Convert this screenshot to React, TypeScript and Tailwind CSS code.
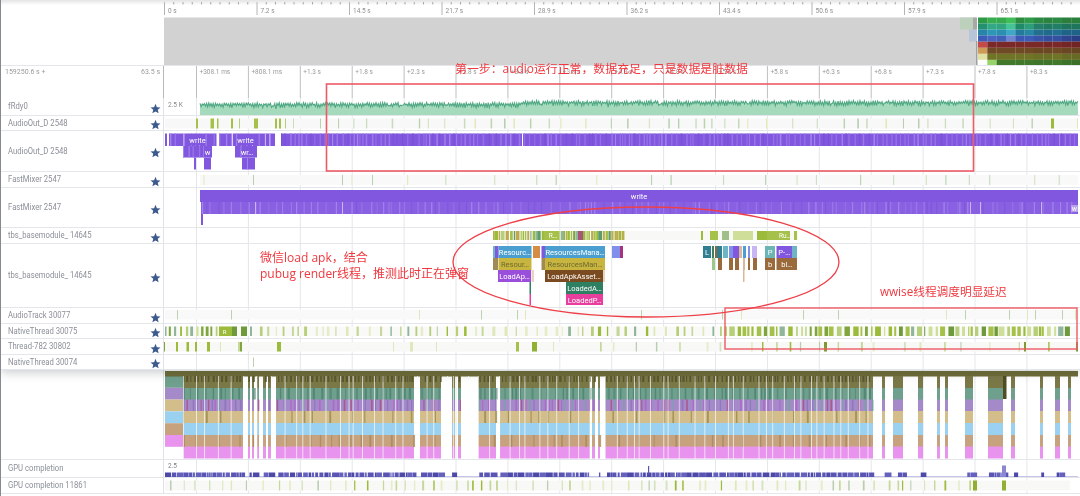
import React from "react";

type Bar = { x: number; w: number; c: string };

function rng(seed: number) {
  let a = seed >>> 0;
  return () => {
    a = (a + 0x6d2b79f5) >>> 0;
    let t = a;
    t = Math.imul(t ^ (t >>> 15), t | 1);
    t ^= t + Math.imul(t ^ (t >>> 7), t | 61);
    return ((t ^ (t >>> 14)) >>> 0) / 4294967296;
  };
}

function scatter(seed: number, from: number, to: number, minGap: number, maxGap: number, maxW: number, colors: string[]): Bar[] {
  const r = rng(seed);
  const out: Bar[] = [];
  let x = from;
  while (x < to) {
    const w = 1 + r() * (maxW - 1);
    out.push({ x, w, c: colors[Math.floor(r() * colors.length)] });
    x += w + minGap + r() * (maxGap - minGap);
  }
  return out;
}

const GRID = Array.from({ length: 17 }, (_, i) => 196 + i * 51.9);
const LIGHT = ["#bcd3b0", "#c9dcc0", "#e3e8b8", "#b5cfb0", "#d5e2c0"];
const MID = ["#b7cf7a", "#dfe8bb", "#c5d89a", "#b9cdb0", "#e6ecc8", "#9dbb3a", "#8fb59a"];
const STRONG = ["#9dbb3a", "#a5c14a", "#7fa53c", "#b7cf7a", "#6f9a3c", "#8fb59a", "#cfdf9a", "#a5c14a"];
const HIST = ["#dfe8bb", "#c5d89a", "#e6ecc8", "#b9cdb0", "#9dbb3a", "#d5e2c0"];

const ON: [number, number][] = [
  [183, 243], [248, 250], [252, 254], [257, 259], [263, 266], [268, 271], [276, 414], [420, 441], [452, 455], [458, 461],
  [478, 496], [500, 590], [592, 595], [598, 600], [605, 873], [882, 885], [893, 903], [918, 923], [937, 940], [945, 948],
  [965, 973], [988, 1003], [1011, 1015], [1040, 1043], [1055, 1060], [1068, 1071],
];

function TrackBars({ top, bottom, bars }: { top: number; bottom: number; bars: Bar[] }) {
  return (
    <>
      {bars.map((b, i) => (
        <rect key={i} x={b.x} y={top} width={b.w} height={bottom - top} fill={b.c} />
      ))}
    </>
  );
}

function Star() {
  return (
    <svg viewBox="0 0 24 24" className="absolute right-[2.5px] top-1/2 mt-[-4px] h-[11px] w-[11px] fill-[#3d5a8e]">
      <path d="M12 1.8l3 7.3 7.9.6-6 5.2 1.9 7.7L12 18.4l-6.8 4.2 1.9-7.7-6-5.2 7.9-.6z" />
    </svg>
  );
}

function Track({ top, cls, label, star = true, children }: { top: number; cls: string; label?: string; star?: boolean; children?: React.ReactNode }) {
  return (
    <div className={`flex border-b border-[#e3e6ea] bg-white ${cls}`}>
      <div className="relative flex w-[163px] shrink-0 items-center border-r border-[#dfe3e7] pl-[7px] pr-[16px] font-['Roboto',sans-serif] text-[9.5px] whitespace-nowrap text-[#8b9098]">
        <span className="origin-left scale-x-[0.81]">{label}</span>
        {star && <Star />}
      </div>
      <svg className="block h-full min-w-0 flex-1 font-['Roboto',sans-serif]">
        <g transform={`translate(-164,${-top})`}>
          {GRID.map((g) => (
            <rect key={g} x={g} y={top} width={1} height={100} fill="#e4e7ea" />
          ))}
          {children}
        </g>
      </svg>
    </div>
  );
}

function Slice({ a, b, y, c, t, tc = "#ffffff", h = 12 }: { a: number; b: number; y: number; c: string; t?: string; tc?: string; h?: number }) {
  return (
    <>
      <rect x={a} y={y} width={b - a} height={h} fill={c} />
      {t && (
        <text x={(a + b) / 2} y={y + 8.5} textAnchor="middle" fontSize={7.5} fill={tc}>
          {t}
        </text>
      )}
    </>
  );
}

const HEAT: string[][] = [
  ["#2f9a45", "#37ad50", "#37aa4f", "#3fbe58", "#2b8c40", "#2f9a48", "#2b8a42", "#2a8440", "#2b8842", "#2a7f3d", "#2a7f3d"],
  ["#239070", "#32a884", "#30a580", "#45c495", "#1f8a68", "#2e9d7a", "#24806a", "#207a60", "#207f66", "#1f755c", "#1f755c"],
  ["#2985a8", "#2e97b5", "#2c8fb0", "#3fa8c8", "#237a9c", "#2787a5", "#226f90", "#206a8c", "#216f92", "#1f6488", "#1f6488"],
  ["#3d5cb8", "#4664c0", "#4060b8", "#6f85cf", "#3a58b4", "#3c5cb8", "#3754a8", "#344e9e", "#3450a0", "#2f4590", "#2b3f86"],
  ["#c44a4a", "#7a2828", "#7a2828", "#7a2828", "#7a2828", "#7a2828", "#7a2828", "#762626", "#7a2828", "#742626", "#702424"],
  ["#cd9b55", "#6f4a24", "#6f4a24", "#6f4a24", "#6f4a24", "#6f4a24", "#6c4822", "#6c4822", "#6f4a24", "#6a4622", "#684522"],
  ["#e0e0a5", "#6f7426", "#6f7426", "#6f7426", "#6f7426", "#6f7426", "#6c7025", "#6c7025", "#6f7426", "#686c24", "#666a24"],
  ["#ffffff", "#96d368", "#41782a", "#41782a", "#41782a", "#41782a", "#3f752a", "#3f752a", "#41782a", "#3d7229", "#3c7028"],
];

const MAJOR = ["0 s", "7.2 s", "14.5 s", "21.7 s", "28.9 s", "36.2 s", "43.4 s", "50.6 s", "57.9 s", "65.1 s"];
const REL: [number, string][] = [
  [0, "+308.1 ms"], [1, "+808.1 ms"], [2, "+1.3 s"], [3, "+1.8 s"], [4, "+2.3 s"], [5, "+2.8 s"], [6, "+3.3 s"], [7, "+3.8 s"],
  [8, "+4.3 s"], [9, "+4.8 s"], [10, "+5.3 s"], [11, "+5.8 s"], [12, "+6.3 s"], [13, "+6.8 s"], [14, "+7.3 s"], [15, "+7.8 s"], [16, "+8.3 s"],
];

function Area() {
  const r = rng(11);
  let d = "M200 116 ";
  let line = "";
  let flip = false;
  for (let x = 200; x <= 1078; x += 1.1) {
    const base = x < 522 ? 102.5 : 100.5;
    flip = !flip;
    const y = base + (flip ? r() * 1.8 : 2.4 + r() * 3) + (r() < 0.02 ? 2 : 0);
    d += `L${x.toFixed(1)} ${y.toFixed(1)} `;
    line += `${line ? "L" : "M"}${x.toFixed(1)} ${y.toFixed(1)} `;
  }
  d += "L1078 116Z";
  return (
    <>
      <path d={d} fill="#a6dabd" />
      <path d={line} fill="none" stroke="#4fa883" strokeWidth={1.1} />
    </>
  );
}

const purpleLight = scatter(21, 281, 1078, 1, 5, 1.6, ["#9470e6", "#9a78e8", "#7a52d6", "#9270e4", "#a184ec"]);
const purpleLeft: [number, number][] = [[165, 167], [169, 216.5], [219, 231], [233, 275]];
const purpleLeftLight = scatter(22, 170, 275, 2, 8, 1.6, ["#a184ec", "#9a78e8", "#c8b6f4"]);
const purpleL2 = scatter(23, 183, 257, 2, 6, 1.5, ["#a184ec", "#9a78e8"]);
const mixerLight = scatter(24, 202, 1077, 1, 9, 1.3, ["#9470e6", "#9a78e8", "#7e58da", "#a184ec"]);
const bigSpeck = scatter(31, 183, 873, 3, 15, 1, ["#ffffff"]);
const specks = scatter(32, 183, 873, 0.8, 3.5, 2.4, ["#4f4d22"]);
const tealSpecks = scatter(33, 183, 873, 2, 7, 2.4, ["#4f7f70", "#3f7565"]);
const purpleSpecks = scatter(34, 183, 873, 1.5, 6, 1.8, ["#a84a7a", "#6fa89a", "#b060c8", "#8a70b8"]);
const tanSpecks = scatter(35, 183, 873, 6, 28, 2, ["#9a8a4a"]);
const brownSpecks = scatter(36, 183, 873, 6, 24, 2, ["#a88a5a"]);

const inOn = (x: number) => ON.some(([a, b]) => x >= a && x <= b);

function BigChart() {
  const rows = [
    { y: 388, c: "#6fa08d" },
    { y: 399.5, c: "#a48ac8" },
    { y: 411, c: "#d3bd8b" },
    { y: 423, c: "#9ad0f0" },
    { y: 435, c: "#c6a27f" },
    { y: 446.5, c: "#e893ee" },
  ];
  const first = ["#6fa08d", "#a48ac8", "#d3bd8b", "#9ad0f0", "#c6a27f", "#e893ee"];
  return (
    <>
      {first.map((c, i) => (
        <rect key={c} x={165} y={376 + i * 11.8} width={18} height={11.8} fill={c} />
      ))}
      <rect x={165} y={371} width={913} height={5.5} fill="#6e6c36" />
      {ON.map(([a, b]) => (
        <React.Fragment key={a}>
          <rect x={a} y={376} width={b - a} height={12} fill="#7b7848" />
          {rows.map((r) => (
            <rect key={r.y} x={a} y={r.y} width={b - a} height={12} fill={r.c} />
          ))}
        </React.Fragment>
      ))}
      {specks.filter((b) => inOn(b.x)).map((b, i) => (
        <rect key={i} x={b.x} y={376} width={b.w} height={6 + ((i * 7) % 7)} fill={b.c} opacity={0.75} />
      ))}
      {tealSpecks.filter((b) => inOn(b.x)).map((b, i) => (
        <rect key={i} x={b.x} y={388} width={b.w} height={11.5} fill={b.c} opacity={0.6} />
      ))}
      {purpleSpecks.filter((b) => inOn(b.x)).map((b, i) => (
        <rect key={i} x={b.x} y={399.5} width={b.w} height={11.5} fill={b.c} opacity={0.75} />
      ))}
      {tanSpecks.filter((b) => inOn(b.x)).map((b, i) => (
        <rect key={i} x={b.x} y={411} width={b.w} height={12} fill={b.c} opacity={0.8} />
      ))}
      {brownSpecks.filter((b) => inOn(b.x)).map((b, i) => (
        <rect key={i} x={b.x} y={435} width={b.w} height={12} fill={b.c} opacity={0.8} />
      ))}
      {bigSpeck.map((b, i) => (
        <rect key={i} x={b.x} y={376} width={b.w * 0.9} height={83} fill="#ffffff" opacity={0.75} />
      ))}
      <rect x={1003} y={376} width={3.5} height={23} fill="#4f4d22" />
    </>
  );
}

const gpuBars = scatter(41, 165, 1075, 0, 1.3, 7, ["#5a55b5", "#6561bd", "#4d49a8", "#5a55b5"]).filter((b) => b.x < 183 || inOn(b.x));

export default function App() {
  return (
    <div className="relative h-[496px] w-[1080px] overflow-hidden border-l border-[#858a90] bg-white blur-[0.5px]">
      <div className="relative z-10 shadow-[0_3px_9px_rgba(60,64,70,0.25)]">
        <div className="flex h-[17px] bg-gradient-to-b from-[#e4e4e4] via-white via-[30%] to-white">
          <div className="w-[163px] shrink-0" />
          <svg className="block h-full min-w-0 flex-1 font-['Roboto',sans-serif]">
            <g transform="translate(-164,0)">
              {Array.from({ length: 99 }, (_, i) => (
                <rect key={i} x={164 + i * 9.25} y={2} width={1} height={i % 10 === 0 ? 13 : 2.5} fill={i % 10 === 0 ? "#b5b5b5" : "#a8a8a8"} />
              ))}
              {MAJOR.map((t, i) => (
                <text key={t} x={168 + i * 92.5} y={13} fontSize={6.5} fill="#8f8f8f">
                  {t}
                </text>
              ))}
            </g>
          </svg>
        </div>
        <div className="flex h-[49px] border-b border-[#e3e6ea]">
          <div className="w-[163px] shrink-0" />
          <svg className="block h-full min-w-0 flex-1">
            <g transform="translate(-164,-17)">
              <rect x={164} y={17.5} width={812} height={48} fill="#d2d2d2" />
              <rect x={960} y={17.5} width={13} height={12} fill="#bcd0bc" />
              <rect x={969} y={29.5} width={8} height={12} fill="#b8c4d8" />
              <rect x={973} y={17.5} width={4} height={12} fill="#a8a8a8" />
              <rect x={976} y={41} width={1.5} height={25} fill="#9f9f9f" />
              {HEAT.map((row, r) =>
                row.map((c, i) => (
                  <rect key={`${r}-${i}`} x={978 + i * 9.32} y={17.5 + r * 6.05} width={9.4} height={6.1} fill={c} />
                )),
              )}
            </g>
          </svg>
        </div>
        <div className="flex h-[32px]">
          <div className="flex w-[163px] shrink-0 items-start justify-between border-r border-[#b5b8bb] pl-[4px] pr-[3px] pt-[1px] font-['Roboto',sans-serif] text-[7px] text-[#9a9a9a]">
            <span>159250.6 s +</span>
            <span>63.5 s</span>
          </div>
          <svg className="block h-full min-w-0 flex-1 font-['Roboto',sans-serif]">
            <g transform="translate(-164,-66)">
              {GRID.map((g) => (
                <rect key={g} x={g} y={66} width={1} height={32} fill="#bdbfc2" />
              ))}
              {REL.map(([i, t]) => (
                <text key={t} x={GRID[i] + 3.5} y={73.5} fontSize={6.5} fill="#9a9a9a">
                  {t}
                </text>
              ))}
            </g>
          </svg>
        </div>

        <Track top={98} cls="h-[18px]" label="fRdy0">
          <Area />
          <text x={168} y={106.5} fontSize={6.5} fill="#8a8a8a">
            2.5 K
          </text>
        </Track>

        <Track top={116} cls="h-[15px]" label="AudioOut_D 2548">
          <rect x={165} y={118.5} width={913} height={10} fill="#f7f8f7" />
          <TrackBars
            top={118.5}
            bottom={128.5}
            bars={[
              { x: 196, w: 2, c: "#a5c14a" }, { x: 210.5, w: 3.5, c: "#a5c14a" }, { x: 217, w: 1.5, c: "#a5c14a" }, { x: 231, w: 2, c: "#a5c14a" }, { x: 239, w: 1, c: "#b7cf7a" },
              { x: 254, w: 4, c: "#a5c14a" }, { x: 275, w: 2, c: "#a5c14a" }, { x: 279, w: 2, c: "#a5c14a" }, { x: 285, w: 1, c: "#b7cf7a" }, { x: 293, w: 1, c: "#c9dcc0" }, { x: 320, w: 1, c: "#b9d3ad" },
              ...scatter(51, 338, 1040, 6, 26, 1.6, LIGHT),
              { x: 1051, w: 3, c: "#9dbb3a" }, { x: 1077, w: 1, c: "#dfe8bb" },
            ]}
          />
        </Track>

        <Track top={131} cls="h-[41px]" label="AudioOut_D 2548">
          {purpleLeft.map(([a, b]) => (
            <rect key={a} x={a} y={133.5} width={b - a} height={12.5} fill="#8257df" />
          ))}
          <TrackBars top={133.5} bottom={146} bars={purpleLeftLight.filter((b) => b.x < 216 || (b.x > 219 && b.x < 231) || b.x > 233)} />
          <rect x={281} y={133.5} width={797} height={12.5} fill="#8257df" />
          <TrackBars top={133.5} bottom={146} bars={purpleLight} />
          <rect x={522} y={133.5} width={1} height={12.5} fill="#ffffff" />
          <rect x={183} y={146} width={29} height={11.5} fill="#8257df" />
          <rect x={235} y={146} width={22} height={11.5} fill="#8257df" />
          <TrackBars top={146} bottom={157.5} bars={purpleL2.filter((b) => b.x < 204 || (b.x > 235 && b.x < 245))} />
          <rect x={194} y={157.5} width={2} height={12} fill="#8257df" />
          <rect x={204} y={157.5} width={7} height={12} fill="#8257df" />
          <rect x={242} y={157.5} width={13} height={12} fill="#8257df" />
          <rect x={247} y={157.5} width={1} height={12} fill="#a184ec" />
          <rect x={190} y={134} width={15} height={11} fill="#8257df" />
          <rect x={238} y={134} width={15} height={11} fill="#8257df" />
          <text x={197.5} y={142.5} textAnchor="middle" fontSize={7.5} fill="#ffffff">write</text>
          <text x={245.5} y={142.5} textAnchor="middle" fontSize={7.5} fill="#ffffff">write</text>
          <text x={207.5} y={154.5} textAnchor="middle" fontSize={7.5} fill="#ffffff">w</text>
          <text x={247} y={154.5} textAnchor="middle" fontSize={7.5} fill="#ffffff">wr…</text>
        </Track>

        <Track top={172} cls="h-[16px]" label="FastMixer 2547">
          <rect x={200} y={175} width={878} height={10} fill="#f8f9f8" />
          <TrackBars
            top={175}
            bottom={185}
            bars={[
              { x: 203.5, w: 1, c: "#dfe8bb" }, { x: 253, w: 1, c: "#b5cfb0" }, { x: 342, w: 1, c: "#b5cfb0" }, { x: 351.5, w: 1, c: "#dfe8bb" },
              ...scatter(52, 372, 1070, 18, 55, 1.2, LIGHT),
            ]}
          />
        </Track>

        <Track top={188} cls="h-[40px]" label="FastMixer 2547">
          <rect x={200} y={190} width={878} height={12} fill="#8257df" />
          <rect x={201} y={202} width={877} height={12} fill="#8a60e2" />
          <TrackBars top={202} bottom={214} bars={mixerLight} />
          <rect x={255} y={202} width={1} height={12} fill="#c8b6f4" />
          <rect x={342} y={202} width={1} height={12} fill="#c8b6f4" />
          <rect x={970} y={202} width={1} height={12} fill="#c8b6f4" />
          <rect x={980} y={202} width={1} height={12} fill="#c8b6f4" />
          <rect x={1041} y={202} width={1} height={12} fill="#c8b6f4" />
          <rect x={201} y={214} width={2} height={11} fill="#8257df" />
          <text x={639} y={198.5} textAnchor="middle" fontSize={7.5} fill="#ffffff">write</text>
          <rect x={1071} y={205} width={7} height={7} fill="#b8a2ec" />
          <text x={1074.5} y={211} textAnchor="middle" fontSize={7} fill="#ffffff">w</text>
        </Track>

        <Track top={228} cls="h-[16px]" label="tbs_basemodule_ 14645">
          <rect x={493} y={231} width={305} height={9} fill="#f8f8f6" />
          <TrackBars
            top={231}
            bottom={240}
            bars={[
              ...scatter(53, 493, 623, 0, 1.2, 4, ["#9dbb3a", "#a5c14a", "#b7b04a", "#7fa53c", "#5f9a6a", "#b7cf7a", "#c0a850", "#8fb59a"]),
              { x: 578, w: 5, c: "#a8557a" }, { x: 544, w: 15, c: "#a5c14a" },
              { x: 701, w: 2, c: "#9dbb3a" }, { x: 710, w: 8, c: "#a5c14a" }, { x: 722, w: 7, c: "#a0c08a" }, { x: 733, w: 20, c: "#cfdf9a" },
              { x: 757, w: 10, c: "#9dbb3a" }, { x: 767, w: 23, c: "#a5c14a" }, { x: 794, w: 3, c: "#a5c14a" },
            ]}
          />
          <text x={553} y={238} textAnchor="middle" fontSize={6.5} fill="#ffffff">R…</text>
          <text x={785} y={238} textAnchor="middle" fontSize={6.5} fill="#ffffff">Ru…</text>
        </Track>

        <Track top={244} cls="h-[64px]" label="tbs_basemodule_ 14645">
          <Slice a={493} b={496} y={246} c="#6bb5c5" />
          <Slice a={495} b={498.5} y={246} c="#8257df" />
          <Slice a={498.5} b={531.5} y={246} c="#4a9fd0" t="Resourc…" />
          <Slice a={533} b={540} y={246} c="#d68e45" />
          <Slice a={541.5} b={545} y={246} c="#8257df" />
          <Slice a={545} b={605} y={246} c="#4a9fd0" t="ResourcesMana…" />
          <Slice a={612} b={620} y={246} c="#8090ea" />
          <Slice a={620} b={623} y={246} c="#a8327f" />
          <Slice a={703} b={711} y={246} c="#2f7f92" t="L" />
          <Slice a={712} b={714} y={246} c="#3f7f60" />
          <Slice a={715} b={717} y={246} c="#8a6a3a" />
          <Slice a={717} b={722} y={246} c="#2f7f92" />
          <Slice a={723} b={728} y={246} c="#6bb5c5" />
          <Slice a={729} b={733} y={246} c="#8090ea" />
          <Slice a={733} b={739} y={246} c="#8257df" />
          <Slice a={739} b={742} y={246} c="#d9b99a" />
          <Slice a={743} b={746} y={246} c="#4a9fd0" />
          <Slice a={748} b={750} y={246} c="#8090ea" />
          <Slice a={752} b={757} y={246} c="#c8b6f4" />
          <Slice a={765} b={775} y={246} c="#6bb5b5" t="P" />
          <Slice a={776.5} b={792} y={246} c="#8257df" t="P-…" />
          <Slice a={792} b={797} y={246} c="#6bb5c5" />
          <Slice a={493} b={498} y={258} c="#a08a55" />
          <Slice a={498.5} b={531.5} y={258} c="#c7b53f" t="Resour…" tc="#6f6a30" />
          <Slice a={541.5} b={545} y={258} c="#a08a55" />
          <Slice a={545} b={605} y={258} c="#c7b53f" t="ResourcesMan…" tc="#6f6a30" />
          <Slice a={712} b={715} y={258} c="#9cc98a" />
          <Slice a={718} b={722} y={258} c="#9a6a3c" />
          <Slice a={729} b={733} y={258} c="#9a6a3c" />
          <Slice a={735} b={739} y={258} c="#9a6a3c" />
          <Slice a={743} b={745} y={258} c="#d9b99a" />
          <Slice a={748} b={750} y={258} c="#9a6a3c" />
          <Slice a={753} b={757} y={258} c="#9a6a3c" />
          <Slice a={765} b={775} y={258} c="#9a6a3c" t="b" />
          <Slice a={776.5} b={797} y={258} c="#9a6a3c" t="bl…" />
          <Slice a={498} b={531} y={270} c="#9a4fdc" t="LoadAp…" />
          <Slice a={531.5} b={534} y={270} c="#e6d5c5" />
          <Slice a={545} b={603} y={270} c="#7a4a20" t="LoadApkAsset…" />
          <Slice a={603} b={605} y={270} c="#e6d5c5" />
          <Slice a={743} b={744.5} y={270} c="#d9b99a" />
          <Slice a={529.5} b={531} y={282} c="#2f7f62" />
          <Slice a={566} b={603} y={282} c="#2f7f62" t="LoadedA…" />
          <Slice a={529.5} b={531} y={294} c="#e83e9e" h={11} />
          <Slice a={566} b={603} y={294} c="#e83e9e" t="LoadedP…" h={11} />
        </Track>

        <Track top={308} cls="h-[16px]" label="AudioTrack 30077">
          <rect x={165} y={310} width={913} height={9.5} fill="#f8f9f8" />
          <TrackBars
            top={310}
            bottom={319.5}
            bars={[177, 231, 419, 481, 517, 525, 641, 722, 741, 803, 838, 946, 965, 1009, 1027, 1035, 1062, 1075].map((x, i) => ({ x, w: 1, c: i % 3 === 2 ? "#dfe8bb" : "#bcd3b0" }))}
          />
        </Track>

        <Track top={324} cls="h-[15px]" label="NativeThread 30075">
          <rect x={165} y={326.5} width={913} height={9.5} fill="#f9f9f8" />
          <TrackBars
            top={326.5}
            bottom={336}
            bars={[
              ...scatter(54, 165, 218, 1.5, 4, 3, STRONG),
              { x: 219, w: 13, c: "#9dbb3a" }, { x: 232, w: 5, c: "#6f9a3c" }, { x: 241, w: 6, c: "#6f9a3c" },
              ...scatter(55, 250, 720, 3, 10, 3.2, MID),
              ...scatter(56, 720, 1070, 0.6, 3.5, 6, STRONG),
            ]}
          />
          <text x={224.5} y={333.5} textAnchor="middle" fontSize={6} fill="#ffffff">R</text>
        </Track>

        <Track top={339} cls="h-[16px]" label="Thread-782 30802">
          <rect x={165} y={342} width={913} height={9.5} fill="#f8f8f7" />
          <TrackBars
            top={342}
            bottom={351.5}
            bars={[
              { x: 164, w: 1, c: "#7fa53c" }, { x: 176, w: 2, c: "#9dbb3a" }, { x: 186.5, w: 2.5, c: "#9dbb3a" }, { x: 195, w: 2, c: "#9dbb3a" }, { x: 207, w: 3, c: "#9dbb3a" }, { x: 220, w: 1, c: "#dfe8bb" },
              { x: 238, w: 2, c: "#c5d89a" }, { x: 240, w: 2, c: "#7fa53c" }, { x: 277, w: 4, c: "#9dbb3a" }, { x: 393, w: 1, c: "#dfe8bb" }, { x: 410, w: 3, c: "#dfe8bb" }, { x: 436, w: 1, c: "#dfe8bb" },
              { x: 516, w: 3, c: "#a5c14a" }, { x: 532, w: 5, c: "#8fb030" }, { x: 553, w: 1, c: "#dfe8bb" },
              ...scatter(57, 600, 1060, 8, 30, 2, HIST),
              { x: 824, w: 3, c: "#7f9a30" }, { x: 1024, w: 2, c: "#7f9a30" }, { x: 1076, w: 2, c: "#7f9a30" },
            ]}
          />
        </Track>

        <Track top={355} cls="h-[15px]" label="NativeThread 30074">
          <rect x={253} y={357.5} width={1} height={9.5} fill="#bcd3b0" />
        </Track>
      </div>

      <Track top={370} cls="h-[90px]" star={false}>
        <BigChart />
      </Track>

      <Track top={460} cls="h-[18px]" label="GPU completion" star={false}>
        <text x={168} y={468} fontSize={6.5} fill="#7f7f7f">2.5</text>
        <rect x={165} y={476.5} width={913} height={1} fill="#8c8ad0" />
        {gpuBars.map((b, i) => (
          <rect key={i} x={b.x} y={472.5} width={b.w} height={5} fill={b.c} />
        ))}
        <rect x={648} y={466} width={1.2} height={8} fill="#5a55b5" />
        <rect x={1002} y={465.5} width={4} height={12} fill="#8a86d4" />
      </Track>

      <Track top={478} cls="h-[16px]" label="GPU completion 11861" star={false}>
        <rect x={165} y={480.5} width={905} height={10} fill="#f8f9f7" />
        <TrackBars
          top={480.5}
          bottom={490.5}
          bars={[
            ...scatter(58, 170, 970, 3, 16, 2, HIST),
            { x: 973, w: 4, c: "#8fb030" }, { x: 1002, w: 4, c: "#8fb030" }, { x: 902, w: 1.2, c: "#9dbb3a" },
          ]}
        />
      </Track>

      <svg className="pointer-events-none absolute left-[-1px] top-0 z-20 h-[496px] w-[1080px]">
        <rect x={326.5} y={84} width={647} height={87} fill="none" stroke="#ee5a66" strokeWidth={1.6} />
        <rect x={725} y={308} width={352} height={41} fill="none" stroke="#ee5a66" strokeWidth={1.4} />
        <ellipse cx={646} cy={262} rx={193} ry={55} fill="none" stroke="#ee3f48" strokeWidth={1.3} />
      </svg>
      <span className="absolute left-[454px] top-[59px] z-20 whitespace-nowrap font-['Open_Sans','Noto_Sans_CJK_SC',sans-serif] text-[11.9px] leading-[18px] text-[#f0383f]">
        第一步：audio运行正常，数据充足，只是数据是脏数据
      </span>
      <span className="absolute left-[259px] top-[250px] z-20 whitespace-nowrap font-['Open_Sans','Noto_Sans_CJK_SC',sans-serif] text-[12px] leading-[16px] text-[#f0383f]">
        微信load apk，结合
        <br />
        pubug render线程，推测此时正在弹窗
      </span>
      <span className="absolute left-[879px] top-[283px] z-20 whitespace-nowrap font-['Open_Sans','Noto_Sans_CJK_SC',sans-serif] text-[11.7px] leading-[16px] text-[#f0383f]">
        wwise线程调度明显延迟
      </span>
    </div>
  );
}
